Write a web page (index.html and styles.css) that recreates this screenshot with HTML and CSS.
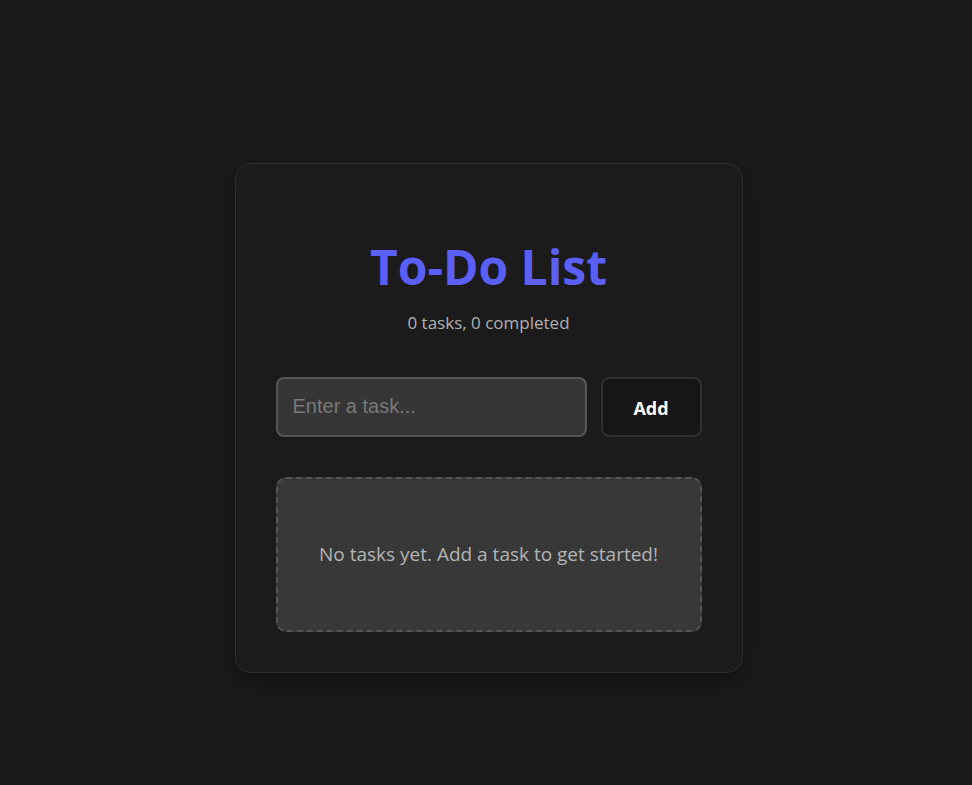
FILE: index.html
```html
<!DOCTYPE html>
<html lang="en">
<head>
<meta charset="utf-8">
<title>To-Do List</title>
<link rel="stylesheet" href="styles.css">
</head>
<body>
<main class="card">
  <h1 class="title">To-Do List</h1>
  <p class="stats">0 tasks, 0 completed</p>
  <form class="add-form">
    <input class="task-input" type="text" placeholder="Enter a task...">
    <button class="add-btn" type="button">Add</button>
  </form>
  <div class="empty">No tasks yet. Add a task to get started!</div>
</main>
</body>
</html>
```
FILE: styles.css
```css
* { box-sizing: border-box; }
html, body { height: 100%; }
body {
  margin: 0;
  padding: 50px 0 0 5px;
  background: #1a1a1a;
  font-family: "Open Sans", "Noto Sans", sans-serif;
  display: flex;
  align-items: center;
  justify-content: center;
}
.card {
  width: 508px;
  background: #1b1b1b;
  border: 1px solid #2e2e2e;
  border-radius: 16px;
  box-shadow: 0 8px 24px rgba(0,0,0,0.35);
  padding: 40px;
  display: flex;
  flex-direction: column;
}
.title {
  margin: 31px 0 0;
  text-align: center;
  color: #5c5ff5;
  font-size: 48px;
  line-height: 64px;
  font-weight: 700;
}
.stats {
  margin: 11px 0 0;
  text-align: center;
  color: #b0b0b0;
  font-size: 17px;
  line-height: 26px;
}
.add-form {
  margin-top: 41px;
  display: flex;
  gap: 14px;
}
.task-input {
  flex: 1;
  height: 60px;
  background: #363636;
  border: 2px solid #555;
  border-radius: 8px;
  padding: 0 15px;
  color: #eee;
  font-family: "Liberation Sans", Arial, sans-serif;
  font-size: 20px;
  outline: none;
}
.task-input::placeholder { color: #7a7a7a; }
.add-btn {
  width: 101px;
  height: 60px;
  padding: 3px 0 0;
  background: #161616;
  border: 2px solid #2f2f2f;
  border-radius: 8px;
  color: #fff;
  font-family: "Open Sans", "Noto Sans", sans-serif;
  font-weight: 700;
  font-size: 18px;
}
.empty {
  margin-top: 40px;
  height: 155px;
  background: #383838;
  border: 2px dashed #555;
  border-radius: 10px;
  display: flex;
  align-items: center;
  justify-content: center;
  color: #b4b4b4;
  font-size: 19px;
}
```
